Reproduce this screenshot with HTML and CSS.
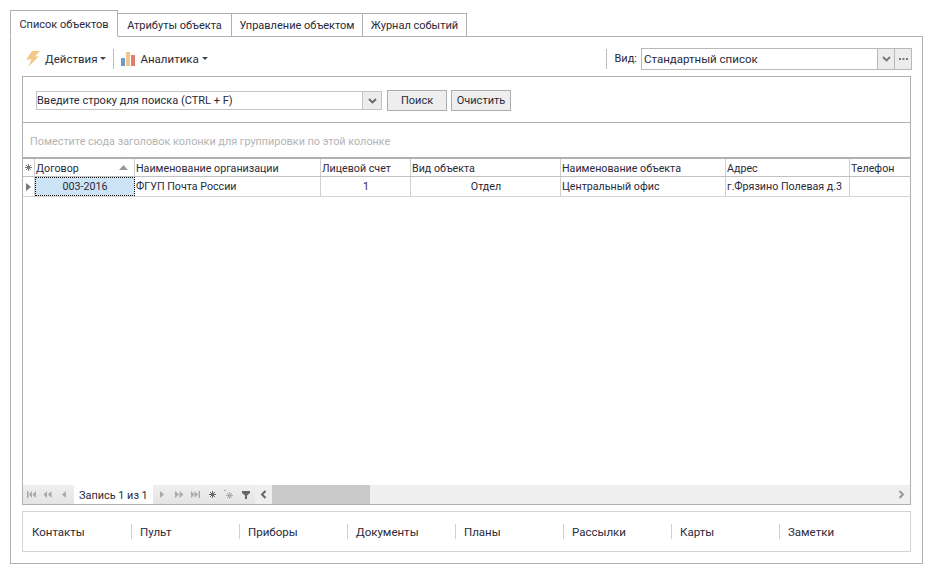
FILE: index.html
```html
<!DOCTYPE html>
<html lang="ru">
<head>
<meta charset="utf-8">
<title>Список объектов</title>
<link rel="stylesheet" href="styles.css">
</head>
<body>
<div class="tabs">
  <div class="tab active">Список объектов</div>
  <div class="tab t2">Атрибуты объекта</div>
  <div class="tab t3">Управление объектом</div>
  <div class="tab t4">Журнал событий</div>
</div>
<div class="panel">
  <div class="toolbar">
    <svg class="bolt" width="14" height="16" viewBox="0 0 14 16"><path d="M6 0h8L9 5.500h4L2 16l3.500-7.500H0z" fill="#f3c98a"/></svg>
    <span class="tool-label">Действия</span><span class="caret"></span>
    <span class="vsep sep-a"></span>
    <svg class="chart" width="14" height="14" viewBox="0 0 14 14"><rect x="0" y="6" width="4" height="8" fill="#6c9bc9"/><rect x="5" y="0" width="4" height="14" fill="#f0c78b"/><rect x="10" y="3" width="4" height="11" fill="#e07f6f"/></svg>
    <span class="tool-label">Аналитика</span><span class="caret"></span>
    <span class="spring"></span>
    <span class="vsep sep-b"></span>
    <span class="view-label">Вид:</span>
    <div class="view-combo">
      <span class="view-value">Стандартный список</span>
      <span class="combo-btn"><svg width="9" height="6" viewBox="0 0 9 6"><path d="M1 1l3.500 3.500L8 1" fill="none" stroke="#777" stroke-width="1.800"/></svg></span>
      <span class="combo-btn dots"><svg width="9" height="2" viewBox="0 0 9 2"><path d="M0 0h2v2H0zM3.500 0h2v2h-2zM7 0h2v2H7z" fill="#777"/></svg></span>
    </div>
  </div>
  <div class="content">
    <div class="search">
      <div class="search-combo">
        <span class="search-text">Введите строку для поиска (CTRL + F)</span>
        <span class="search-arrow"><svg width="9" height="6" viewBox="0 0 9 6"><path d="M1 1l3.500 3.500L8 1" fill="none" stroke="#666" stroke-width="1.800"/></svg></span>
      </div>
      <button class="btn btn-find">Поиск</button>
      <button class="btn btn-clear">Очистить</button>
    </div>
    <div class="group-hint">Поместите сюда заголовок колонки для группировки по этой колонке</div>
    <div class="grid">
      <div class="row head">
        <div class="cell ind"><svg width="7" height="7" viewBox="0 0 7 7"><path d="M3.500 0v7M0 3.500h7M1 1l5 5M6 1L1 6" stroke="#777" stroke-width="1"/></svg></div>
        <div class="cell sort">Договор<svg width="9" height="5" viewBox="0 0 9 5"><path d="M4.500 0L9 5H0z" fill="#999"/></svg></div>
        <div class="cell">Наименование организации</div>
        <div class="cell">Лицевой счет</div>
        <div class="cell">Вид объекта</div>
        <div class="cell">Наименование объекта</div>
        <div class="cell">Адрес</div>
        <div class="cell last">Телефон</div>
      </div>
      <div class="row body-row">
        <div class="cell ind"><svg width="5" height="8" viewBox="0 0 5 8"><path d="M0 0l5 4-5 4z" fill="#777"/></svg></div>
        <div class="cell center selected">003-2016</div>
        <div class="cell">ФГУП Почта России</div>
        <div class="cell center">1</div>
        <div class="cell center">Отдел</div>
        <div class="cell">Центральный офис</div>
        <div class="cell">г.Фрязино Полевая д.3</div>
        <div class="cell last"></div>
      </div>
      <div class="grid-space"></div>
      <div class="nav">
        <div class="nav-btns nav-left">
          <svg width="9" height="7" viewBox="0 0 9 7"><path d="M0 0h1.500v7H0zM5 0v7L2 3.500zM9 0v7L5.500 3.500z" fill="#aaa"/></svg>
          <svg width="9" height="7" viewBox="0 0 9 7"><path d="M4 0v7L.5 3.500zM8.500 0v7L5 3.500z" fill="#aaa"/></svg>
          <svg width="4" height="7" viewBox="0 0 4 7"><path d="M4 0v7L0 3.500z" fill="#aaa"/></svg>
        </div>
        <div class="record">Запись 1 из 1</div>
        <div class="nav-btns nav-right">
          <svg width="4" height="7" viewBox="0 0 4 7"><path d="M0 0v7l4-3.500z" fill="#aaa"/></svg>
          <svg width="9" height="7" viewBox="0 0 9 7"><path d="M0 0v7l4-3.500zM4.500 0v7l4-3.500z" fill="#aaa"/></svg>
          <svg width="9" height="7" viewBox="0 0 9 7"><path d="M0 0v7l3.500-3.500zM3.500 0v7L7 3.500zM7.500 0H9v7H7.500z" fill="#aaa"/></svg>
          <svg width="7" height="7" viewBox="0 0 7 7"><path d="M3.500 0v7M0 3.500h7M1 1l5 5M6 1L1 6" stroke="#666"/></svg>
          <svg width="9" height="9" viewBox="0 0 9 9"><path d="M5.500 2v7M2 5.500h7M3 3l5 5M8 3L3 8" stroke="#aaa"/><path d="M0 0h2v1H0z" fill="#aaa"/></svg>
          <svg width="8" height="8" viewBox="0 0 8 8"><path d="M0 0h8v2L5 4.500V8H3V4.500L0 2z" fill="#666"/></svg>
        </div>
        <div class="scroll-left"><svg width="7" height="9" viewBox="0 0 7 9"><path d="M5.500 1L2 4.500 5.500 8" fill="none" stroke="#666" stroke-width="2"/></svg></div>
        <div class="thumb"></div>
        <div class="track"></div>
        <div class="scroll-right"><svg width="7" height="9" viewBox="0 0 7 9"><path d="M1.500 1L5 4.500 1.500 8" fill="none" stroke="#999" stroke-width="2"/></svg></div>
      </div>
    </div>
  </div>
  <div class="links">
    <div class="link">Контакты</div>
    <div class="link">Пульт</div>
    <div class="link">Приборы</div>
    <div class="link">Документы</div>
    <div class="link">Планы</div>
    <div class="link">Рассылки</div>
    <div class="link">Карты</div>
    <div class="link">Заметки</div>
  </div>
</div>
</body>
</html>
```

FILE: styles.css
```css
* { box-sizing: border-box; }
html, body { margin: 0; height: 100%; background: #fff; overflow: hidden; }
body {
  padding: 10px 10px 0;
  font-family: Roboto, "Noto Sans", sans-serif;
  font-size: 11px;
  line-height: 14px;
  color: #2a2a3a;
}
svg { display: block; flex: none; }

.tabs { display: flex; align-items: flex-end; height: 27px; position: relative; z-index: 1; }
.tab {
  height: 24px;
  padding: 5px 0 0;
  text-align: center;
  border: 1px solid #b0b0b0;
  border-left: 0;
  background: #fff;
}
.tab.active { width: 108px; height: 27px; padding-top: 7px; border-left: 1px solid #b0b0b0; border-bottom-color: #fff; }
.t2 { width: 114px; }
.t3 { width: 131px; }
.t4 { width: 104px; }

.panel {
  width: 913px;
  height: 528px;
  margin-top: -1px;
  padding: 0 11px;
  border: 1px solid #b0b0b0;
  display: flex;
  flex-direction: column;
}

.toolbar { height: 39px; display: flex; align-items: center; padding-top: 4px; flex: none; }
.bolt { margin: 0 5px 0 4px; }
.chart { margin-right: 5px; }
.tool-label { font-size: 11.500px; }
.caret { width: 0; height: 0; border: 3px solid transparent; border-top-color: #444; border-bottom: 0; margin-left: 3px; }
.vsep { width: 1px; height: 20px; background: #bdbdbd; }
.sep-a { margin: 0 7px 0 7px; }
.sep-b { margin-right: 7px; }
.spring { flex: 1; }
.view-label { margin-right: 4px; }
.view-combo { width: 271px; height: 22px; border: 1px solid #b8b8b8; display: flex; align-items: stretch; margin-right: -1px; }
.view-value { flex: 1; padding: 3px 0 0 2px; font-size: 11.500px; }
.combo-btn { width: 17px; background: #ececec; border-left: 1px solid #b8b8b8; display: flex; align-items: center; justify-content: center; }

.content {
  height: 429px;
  border: 1px solid #b0b0b0;
  display: flex;
  flex-direction: column;
  flex: none;
}
.search {
  height: 46px;
  flex: none;
  display: flex;
  align-items: flex-start;
  padding: 13px 0 0 13px;
  border-bottom: 1px solid #b0b0b0;
}
.search-combo { width: 346px; height: 19px; margin-top: 1px; border: 1px solid #c4c4c4; display: flex; }
.search-text { flex: 1; padding-top: 2px; }
.search-arrow { width: 19px; background: #ececec; border-left: 1px solid #c4c4c4; display: flex; align-items: center; justify-content: center; }
.btn {
  height: 21px;
  padding: 0;
  margin: 0;
  font: inherit;
  color: inherit;
  border: 1px solid #adadad;
  background: #eeeeee;
}
.btn-find { width: 60px; margin-left: 5px; }
.btn-clear { width: 60px; margin-left: 4px; }

.group-hint { height: 34px; flex: none; padding: 12px 0 0 7px; color: #b4b4b4; font-size: 10.850px; }

.grid { flex: 1; display: flex; flex-direction: column; border-top: 2px solid #b0b0b0; min-height: 0; }
.row {
  display: grid;
  grid-template-columns: 12px 100px 186px 90px 150px 165px 124px 60px;
  flex: none;
  font-size: 10.700px;
}
.head { height: 18px; border-bottom: 1px solid #c2c2c2; }
.body-row { height: 20px; border-bottom: 1px solid #d4d4d4; }
.cell { border-right: 1px solid #d0d0d0; padding: 3px 0 0 1px; white-space: nowrap; overflow: hidden; }
.body-row .cell { padding-top: 3px; }
.cell.last { border-right: 0; }
.center { text-align: center; }
.cell.ind { padding: 0; display: flex; align-items: center; justify-content: center; }
.sort { display: flex; justify-content: space-between; align-items: flex-start; padding-right: 6px; }
.sort svg { margin-top: 3px; }
.selected { background: #cde4f7; outline: 1px dotted #111; outline-offset: -1px; border-right: 1px solid transparent; }

.grid-space { flex: 1; }
.nav { height: 19px; flex: none; display: flex; background: linear-gradient(#efefef, #e4e4e4); }
.nav-btns { display: flex; align-items: center; }
.nav-left { width: 51px; padding-left: 4px; gap: 7px; }
.nav-left svg:last-child { margin-left: 3px; }
.record { width: 79px; background: #fff; padding: 4px 0 0 5px; font-size: 10.900px; }
.nav-right { width: 102px; padding-left: 7px; gap: 8px; }
.nav-right svg:nth-child(2) { margin-left: 3px; }
.nav-right svg:nth-child(3) { margin-left: -1px; }
.nav-right svg:nth-child(4) { margin-left: 1px; }
.nav-right svg:nth-child(6) { margin-left: 1px; }
.scroll-left { width: 17px; background: #efefef; display: flex; align-items: center; justify-content: center; }
.thumb { width: 98px; background: #c9c9c9; }
.track { flex: 1; background: #efefef; }
.scroll-right { width: 17px; background: #efefef; display: flex; align-items: center; justify-content: center; }

.links {
  height: 41px;
  margin-top: 6px;
  padding-left: 1px;
  flex: none;
  border: 1px solid #d4d4d4;
  display: flex;
  align-items: center;
}
.link { width: 108px; height: 15px; padding: 1px 0 0 8px; border-right: 1px solid #d0d0d0; line-height: 14px; font-size: 11.500px; flex: none; }
.link:last-child { border-right: 0; }
```
